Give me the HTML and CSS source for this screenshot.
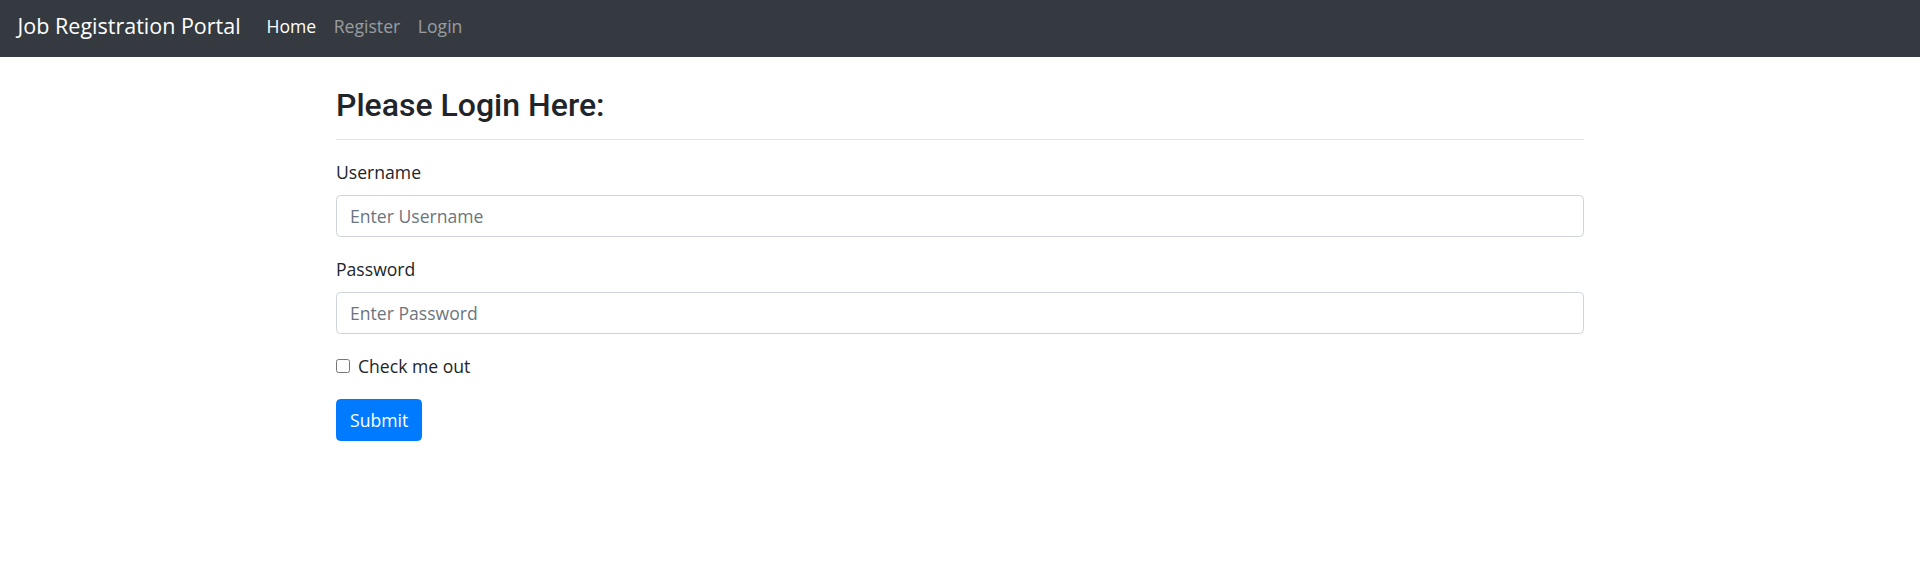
FILE: index.html
```html
<!DOCTYPE html>
<html lang="en">
<head>
<meta charset="utf-8">
<title>Job Registration Portal</title>
<link rel="stylesheet" href="styles.css">
</head>
<body>
<nav class="navbar">
  <a class="brand" href="#">Job Registration Portal</a>
  <ul class="nav">
    <li><a class="nav-link active" href="#">Home</a></li>
    <li><a class="nav-link" href="#">Register</a></li>
    <li><a class="nav-link" href="#">Login</a></li>
  </ul>
</nav>
<main class="page">
  <div class="content">
    <h2 class="title">Please Login Here:</h2>
    <hr class="rule">
    <form class="form">
      <div class="group">
        <label class="label" for="username">Username</label>
        <input class="control" id="username" type="text" placeholder="Enter Username">
      </div>
      <div class="group">
        <label class="label" for="password">Password</label>
        <input class="control" id="password" type="password" placeholder="Enter Password">
      </div>
      <div class="check">
        <input class="check-input" id="remember" type="checkbox">
        <label class="check-label" for="remember">Check me out</label>
      </div>
      <button class="btn" type="submit">Submit</button>
    </form>
  </div>
</main>
</body>
</html>
```

FILE: styles.css
```css
* { box-sizing: border-box; }
html, body { margin: 0; padding: 0; }
body {
  font-family: "Open Sans", "Noto Sans", sans-serif;
  font-size: 17.6px;
  line-height: 26px;
  color: #212529;
  background: #fff;
}
.navbar {
  display: flex;
  align-items: center;
  height: 57px;
  padding: 0 17.6px 6px;
  background: #343a40;
}
.brand {
  font-size: 21.5px;
  color: #fff;
  text-decoration: none;
  margin-right: 17px;
  line-height: 33px;
}
.nav {
  display: flex;
  list-style: none;
  margin: 0;
  padding: 0;
}
.nav-link {
  display: block;
  padding: 0 8.8px;
  color: rgba(255,255,255,.5);
  text-decoration: none;
}
.nav-link.active { color: #fff; }
.page { display: block; }
.content {
  width: 1248px;
  margin: 0 auto;
}
.title {
  font-family: Roboto, "Open Sans", sans-serif;
  font-size: 32px;
  line-height: 42px;
  font-weight: 500;
  margin: 27px 0 0;
}
.rule {
  border: 0;
  border-top: 1px solid rgba(0,0,0,.1);
  margin: 13px 0 19px;
  height: 0;
}
.group { margin-bottom: 19px; }
.label {
  display: block;
  margin-bottom: 10px;
}
.control {
  display: block;
  width: 100%;
  height: 42px;
  padding: 0 13px;
  font-family: inherit;
  font-size: 17.6px;
  color: #495057;
  background: #fff;
  border: 1px solid #ced4da;
  border-radius: 4.4px;
}
.control::placeholder { color: #6c757d; }
.check {
  display: flex;
  align-items: center;
  margin-bottom: 20px;
}
.check-input {
  width: 14px;
  height: 14px;
  margin: 0 8px 0 0;
}
.btn {
  display: inline-block;
  height: 42px;
  padding: 0 13px;
  font-family: inherit;
  font-size: 17.6px;
  color: #fff;
  background: #007bff;
  border: 1px solid #007bff;
  border-radius: 4.4px;
}
```
